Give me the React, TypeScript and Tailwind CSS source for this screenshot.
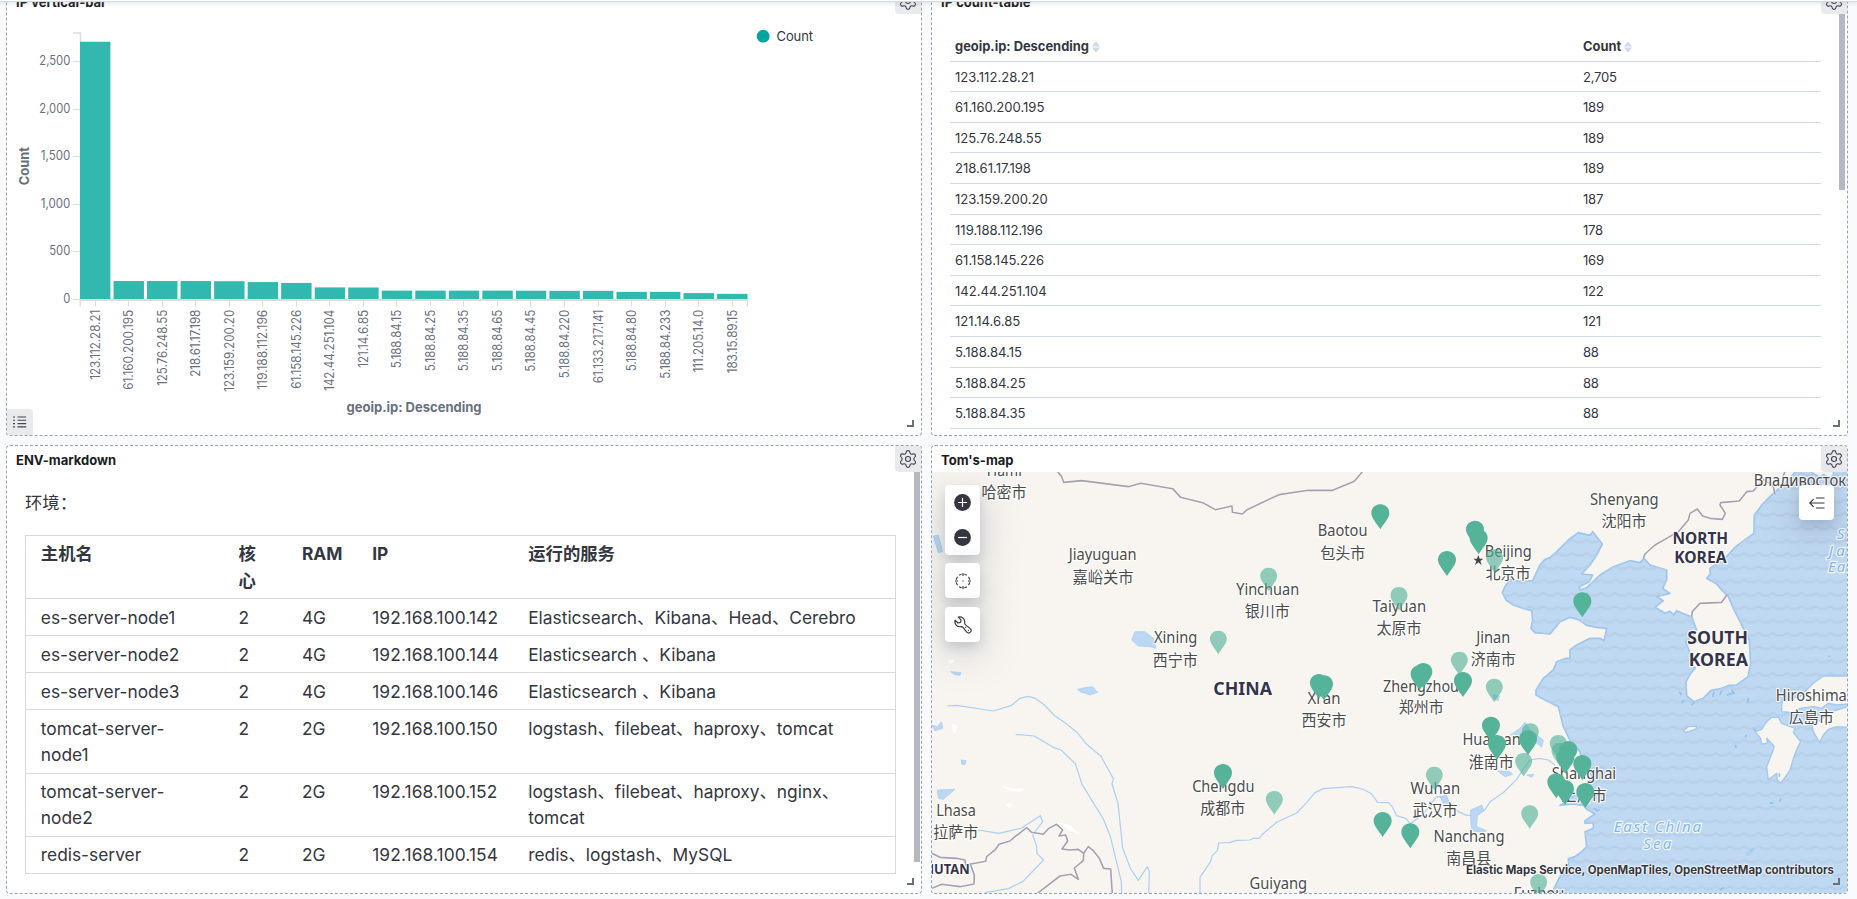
import React from 'react';
import { Settings } from 'lucide-react';

const UI = "font-['Inter','Noto_Sans_CJK_SC',sans-serif]";

/* ---------- shared panel chrome ---------- */

function ResizeHandle() {
  return <div className="absolute right-[7px] bottom-[8px] h-[7px] w-[7px] border-r-2 border-b-2 border-[#69707d]" />;
}

function Panel({ title, children }: { title: string; children: React.ReactNode }) {
  return (
    <section className="relative flex h-[449px] flex-col overflow-hidden rounded-[4px] border border-dashed border-[#98a2b3] bg-white">
      <header className="flex h-[26px] shrink-0 items-center justify-between">
        <h2 className="pt-[2px] pl-[9px] text-[13px] leading-[26px] font-bold text-[#1a1c21]">{title}</h2>
        <button className="flex h-[26px] w-[26px] items-center justify-center rounded-bl-[4px] bg-[#e9eaec] text-[#404552]">
          <Settings size={20} strokeWidth={1.35} />
        </button>
      </header>
      <div className="relative min-h-0 flex-1">{children}</div>
      <ResizeHandle />
    </section>
  );
}

/* ---------- bar chart ---------- */

const bars: [string, number, number][] = [
  ['123.112.28.21', 2705, 70],
  ['61.160.200.195', 189, 80],
  ['125.76.248.55', 189, 76],
  ['218.61.17.198', 189, 67],
  ['123.159.200.20', 187, 82],
  ['119.188.112.196', 178, 80],
  ['61.158.145.226', 169, 79],
  ['142.44.251.104', 122, 81],
  ['121.14.6.85', 121, 58],
  ['5.188.84.15', 88, 58.5],
  ['5.188.84.25', 88, 61.5],
  ['5.188.84.35', 88, 61.5],
  ['5.188.84.65', 88, 61.5],
  ['5.188.84.45', 87, 62],
  ['5.188.84.220', 86, 68.5],
  ['61.133.217.141', 86, 73.5],
  ['5.188.84.80', 75, 61.5],
  ['5.188.84.233', 75, 69],
  ['111.205.14.0', 62, 62.5],
  ['183.15.89.15', 54, 63.5],
];

const yTicks: [string, number, number][] = [
  ['0', 299.5, 7],
  ['500', 251.5, 21],
  ['1,000', 204.5, 29.5],
  ['1,500', 156.5, 29.5],
  ['2,000', 109.5, 31],
  ['2,500', 61.5, 31],
];

function BarChart() {
  return (
    <svg className="block" width="914" height="421" viewBox="7 14 914 421" fontSize="12.4" fill="#69707d">
      {yTicks.map(([label, y, w]) => (
        <g key={label}>
          <path d={`M73 ${y}H80`} stroke="#ddd" />
          <text x={70.3 - w} y={y + 3.8} textLength={w} lengthAdjust="spacingAndGlyphs">{label}</text>
        </g>
      ))}
      <path d="M73 33H80.5V299" stroke="#ddd" strokeWidth="1.6" fill="none" />
      {bars.map(([ip, v, w], i) => {
        const x = 80 + i * 33.53;
        const tick = Math.floor(95.1 + i * 33.53) + 0.5;
        const h = v * 0.0951;
        return (
          <g key={ip}>
            <rect x={x} y={299 - h} width="30.4" height={h} fill="#33b8af" />
            <path d={`M${tick} 301V306.5`} stroke="#ddd" />
            <text transform={`translate(${tick + 4.2} ${309.8 + w}) rotate(-90)`} textLength={w} lengthAdjust="spacingAndGlyphs">{ip}</text>
          </g>
        );
      })}
      <path d="M80 300H748" stroke="#ddd" strokeWidth="2" />
      <path d="M80.2 299V306.5M747.5 299V306.5" stroke="#ddd" strokeWidth="1.4" />
      <text transform="translate(29.3 185.3) rotate(-90)" fontWeight="700" fontSize="13" textLength="38.3">Count</text>
      <text x="346.5" y="412" fontWeight="700" fontSize="13" textLength="135">geoip.ip: Descending</text>
      <circle cx="763.2" cy="36.2" r="6.4" fill="#00a69b" />
      <text x="776.5" y="41" fill="#343741" fontSize="13" textLength="36.5">Count</text>
    </svg>
  );
}

function ListIcon() {
  return (
    <svg width="14" height="12" viewBox="0 0 14 12" stroke="#404552" strokeWidth="1.1">
      <path d="M0 1H2M0 4.3H2M0 7.6H2M0 10.9H2M4.5 1H13.2M4.5 4.3H13.2M4.5 7.6H13.2M4.5 10.9H13.2" />
    </svg>
  );
}

/* ---------- count table ---------- */

const counts: [string, string][] = [
  ['123.112.28.21', '2,705'],
  ['61.160.200.195', '189'],
  ['125.76.248.55', '189'],
  ['218.61.17.198', '189'],
  ['123.159.200.20', '187'],
  ['119.188.112.196', '178'],
  ['61.158.145.226', '169'],
  ['142.44.251.104', '122'],
  ['121.14.6.85', '121'],
  ['5.188.84.15', '88'],
  ['5.188.84.25', '88'],
  ['5.188.84.35', '88'],
];

function SortIcon() {
  return (
    <svg className="ml-[3px]" width="8" height="10" viewBox="0 0 8 10" fill="#d3dae6">
      <path d="M4 0Q5 0 5.6 1.1L8 4.4H0L2.4 1.1Q3 0 4 0ZM4 10Q5 10 5.6 8.9L8 5.6H0L2.4 8.9Q3 10 4 10Z" />
    </svg>
  );
}

function CountTable() {
  return (
    <div className="h-full overflow-hidden pt-[17px] pl-[18px] text-[13.1px] text-[#343741]">
      <div className="w-[871px]">
        <div className="flex h-[30.6px] items-center border-b border-[#d3dae6] pt-[2px] pl-[5px] text-[12.9px] font-bold">
          <div className="flex w-[628px] items-center">geoip.ip: Descending<SortIcon /></div>
          <div className="flex items-center">Count<SortIcon /></div>
        </div>
        {counts.map(([ip, n]) => (
          <div key={ip} className="flex h-[30.6px] items-center border-b border-[#d3dae6] pt-[2px] pl-[5px]">
            <div className="w-[628px]">{ip}</div>
            <div className="tracking-[-0.02em]">{n}</div>
          </div>
        ))}
      </div>
      <div className="absolute top-0 right-[2px] h-[176px] w-[6px] bg-[#b4b8c2]" />
    </div>
  );
}

/* ---------- markdown ---------- */

const hosts: [string[], string, string, string[]][] = [
  [['es-server-node1'], '4G', '192.168.100.142', ['Elasticsearch、Kibana、Head、Cerebro']],
  [['es-server-node2'], '4G', '192.168.100.144', ['Elasticsearch 、Kibana']],
  [['es-server-node3'], '4G', '192.168.100.146', ['Elasticsearch 、Kibana']],
  [['tomcat-server-', 'node1'], '2G', '192.168.100.150', ['logstash、filebeat、haproxy、tomcat']],
  [['tomcat-server-', 'node2'], '2G', '192.168.100.152', ['logstash、filebeat、haproxy、nginx、', 'tomcat']],
  [['redis-server'], '2G', '192.168.100.154', ['redis、logstash、MySQL']],
];

function Lines({ items }: { items: string[] }) {
  return <>{items.map((t) => <span key={t} className="block whitespace-nowrap">{t}</span>)}</>;
}

function Markdown() {
  const row = 'border-b border-[#d9d9d9] align-top';
  return (
    <div className="h-full overflow-hidden pt-[18px] pl-[18px] text-[17.35px] leading-[26.4px] text-[#343741]">
      <p>环境：</p>
      <table className="mt-[18.6px] w-[871px] table-fixed border-collapse border border-[#d9d9d9] text-left [&_td]:pt-[5.2px] [&_td]:pb-[4.4px] [&_td]:pl-[14.8px] [&_th]:pt-[5.2px] [&_th]:pb-[4.4px] [&_th]:pl-[14.8px]">
        <colgroup>
          <col className="w-[198.3px]" />
          <col className="w-[63.3px]" />
          <col className="w-[70.3px]" />
          <col className="w-[156px]" />
          <col />
        </colgroup>
        <thead>
          <tr className={row}>
            <th>主机名</th>
            <th><Lines items={['核', '心']} /></th>
            <th>RAM</th>
            <th>IP</th>
            <th>运行的服务</th>
          </tr>
        </thead>
        <tbody>
          {hosts.map(([name, ram, ip, services]) => (
            <tr key={ip} className={row}>
              <td><Lines items={name} /></td>
              <td>2</td>
              <td>{ram}</td>
              <td className="tracking-[0.006em]">{ip}</td>
              <td><Lines items={services} /></td>
            </tr>
          ))}
        </tbody>
      </table>
      <div className="absolute top-0 right-[1px] h-[390px] w-[6px] bg-[#b4b8c0]" />
    </div>
  );
}

/* ---------- map ---------- */

const SEA =
  'M2790 90L2625 90 2625 97 2595 130 2560 160 2530 190 2503 225 2502 280 2460 310 2445 322 2420 350 2370 385 2371 402 2360 415 2390 432 2405 450 2425 470 2440 505 2460 545 2488 600 2490 640 2492 670 2484 710 2450 735 2428 736 2405 745 2372 752 2350 775 2322 785 2300 768 2298 725 2312 700 2326 684 2312 672 2322 660 2310 640 2297 605 2315 590 2330 570 2315 530 2300 525 2270 512 2262 525 2250 514 2235 520 2205 502 2230 482 2210 470 2250 460 2228 445 2240 420 2240 390 2190 375 2172 355 2160 368 2130 362 2080 380 2040 405 2000 443 1980 450 1978 440 2008 425 2018 405 1985 402 2010 375 2030 345 2047 312 2018 275 2010 286 1975 278 1945 300 1910 335 1890 353 1875 358 1860 375 1848 400 1838 422 1800 425 1770 418 1755 440 1747 458 1758 480 1780 495 1815 507 1835 512 1838 540 1833 565 1845 578 1890 582 1900 570 1920 545 1950 532 1978 540 2000 556 2030 562 2060 565 2052 602 2040 595 2010 595 1970 615 1950 630 1950 655 1938 655 1910 665 1900 690 1870 715 1848 750 1848 765 1875 780 1915 800 1930 860 1952 905 1980 935 1985 960 2010 990 2015 1010 2000 1040 1970 1060 1945 1080 1920 1096 1960 1092 1990 1096 2000 1108 2025 1122 1995 1142 1995 1150 2020 1148 2020 1165 1995 1175 2000 1220 1985 1235 1965 1250 1945 1256 1947 1280 1920 1310 1900 1350 1880 1370 2790 1370Z';

const ISLANDS = [
  'M2585 795L2588 780 2640 770 2680 730 2710 708 2790 708 2790 792 2750 795 2725 790 2705 805 2680 800 2640 805 2620 818 2585 815Z',
  'M2790 798L2750 810 2720 820 2705 840 2675 850 2680 875 2698 908 2710 885 2725 868 2750 860 2790 862Z',
  'M2505 875L2525 868 2540 845 2555 832 2575 832 2585 850 2625 865 2620 878 2642 905 2632 925 2622 950 2610 990 2600 1005 2582 1030 2572 1020 2570 1000 2545 1020 2540 980 2560 930 2562 918 2540 895 2542 910 2525 912 2522 895Z',
  'M2290 872L2305 860 2330 858 2328 867 2300 877Z',
  'M2675 90H2740V108L2725 112 2710 103 2700 112 2675 97Z',
  'M2480 1240L2500 1226 2495 1236 2482 1246Z',
];

const ISLETS =
  'M2315 795L2322 788M2278 755L2285 765M2286 788L2292 780M2378 770L2382 755M2400 765L2405 752M2420 765L2445 758M2435 748L2440 760M2482 790L2486 774M2448 925L2446 915M2475 892L2480 885M2500 862L2508 875M2578 1085L2583 1075M2550 1090L2560 1088M2028 1112L2040 1110M2400 1350L2412 1342M2725 650L2730 648M2578 1000V1010M2022 1105L2030 1112';

const RIVERS =
  'M82 798L110 796 220 813 273 797 300 775 325 769 345 775 370 792 405 828 435 848 470 876 500 913 543 949 580 1016 576 1032 594 1090 608 1224 632 1287 655 1321 682 1280 688 1295 686 1362M287 883L343 888 400 922 423 930 466 971 486 1033 550 1137 571 1189 604 1325 605 1362M175 1170L237 1180 305 1164 361 1127 368 1145 338 1185 350 1220 351 1241 371 1260 308 1325 265 1346 195 1358M840 1362L840 1312 872 1264 877 1246 892 1232 896 1209 928 1208 950 1201 990 1200 1000 1195 1018 1195 1025 1185 1070 1147 1130 1119 1155 1093 1185 1058 1210 1046 1295 1040 1330 1048 1355 1062 1373 1087 1405 1088 1417 1100 1430 1127 1457 1135 1471 1151 1510 1122 1550 1070 1580 1072 1590 1090 1615 1115 1640 1126 1670 1126 1695 1110 1710 1085 1752 1056 1790 1018 1815 980 1830 960 1858 955 1885 960 1905 975';

const BORDERS =
  'M413 95L425 110 431 127 485 122 625 140 662 130 758 146 782 172 848 188 886 209 936 198 937 217 967 222 980 210 1077 164 1165 151 1238 151 1303 124 1328 94M2170 355L2175 342 2205 315 2240 295 2275 275 2305 240 2310 220 2332 207 2348 228 2370 235 2407 238 2416 220 2400 195 2402 188 2458 183 2480 155 2500 153 2520 130 2532 118 2560 140 2565 163M2595 95L2588 112M2315 530L2317 515 2340 490 2405 487 2422 463M36 1240L60 1252 110 1255 135 1260 137 1275 197 1264 200 1250 225 1230 237 1213 270 1203 285 1190 320 1163 335 1177 370 1183 385 1166 410 1153 428 1170 417 1188 437 1185 443 1203 426 1227 450 1230 475 1228 491 1240 505 1220 520 1232 538 1255 551 1285 572 1287 577 1362M491 1240L490 1262 463 1284 475 1318 453 1303 420 1308 352 1360M150 1270L163 1305 162 1332 120 1340 65 1333 36 1345';

const LAKES =
  'M635 600L645 575 675 575 700 595 708 625 690 620 655 618ZM473 748L500 742 518 740 533 757 510 765 480 755ZM40 288L55 285 68 335 55 338ZM36 855L52 860 65 845 68 865 45 873ZM92 695L123 698 120 706 105 704ZM52 1050L105 1048 70 1078 55 1075ZM124 960L138 962 135 974 125 972ZM1652 1110L1685 1095 1692 1110 1672 1125 1670 1160 1700 1172 1690 1178 1655 1172 1652 1140ZM1800 865L1815 847 1830 870 1870 900 1865 922 1845 905 1800 885 1770 885ZM1733 993L1770 995 1778 1003 1755 1010ZM1820 1005L1842 1003 1835 1012ZM1560 1070L1580 1065 1585 1090 1570 1092ZM1720 765L1738 768 1735 782 1722 778Z';

const SNOW =
  'M243 1037L275 1045 315 1047 300 1055 270 1053ZM96 852L110 855 108 880 100 878ZM408 1145L450 1155 480 1182 450 1172ZM253 1090L280 1092 268 1104ZM85 660L100 658 100 670 88 670ZM175 1262L205 1255 195 1275Z';

/* [text, centre x, baseline, drawn width] */
const cities: [string, number, number, number][] = [
  ['Hami', 253, 107, 105], ['哈密市', 252, 175, 135],
  ['Jiayuguan', 548, 361, 204], ['嘉峪关市', 549, 428, 183],
  ['Xining', 767, 610, 130], ['西宁市', 766, 678, 135],
  ['Chengdu', 910, 1055, 187], ['成都市', 908, 1122, 135],
  ['Lhasa', 108, 1127, 119], ['拉萨市', 107, 1194, 135],
  ['Baotou', 1268, 289, 149], ['包头市', 1268, 356, 135],
  ['Yinchuan', 1043, 465, 189], ['银川市', 1042, 531, 135],
  ['Taiyuan', 1438, 515, 161], ['太原市', 1437, 581, 135],
  ['Beijing', 1765, 350, 141], ['北京市', 1764, 417, 135],
  ['Jinan', 1720, 608, 102], ['济南市', 1720, 675, 135],
  ['Zhengzhou', 1503, 755, 228], ['郑州市', 1504, 820, 135],
  ["Xi'an", 1212, 791, 99], ['西安市', 1212, 857, 135],
  ['Huainan', 1715, 915, 175], ['淮南市', 1714, 983, 135],
  ['Wuhan', 1546, 1062, 149], ['武汉市', 1545, 1128, 135],
  ['Nanchang', 1647, 1206, 213], ['南昌县', 1646, 1271, 135],
  ['Guiyang', 1075, 1346, 173],
  ['Fuzhou', 1857, 1378, 152],
  ['Shanghai', 1992, 1017, 193], ['上海市', 1992, 1082, 135],
  ['Shenyang', 2113, 195, 206], ['沈阳市', 2112, 260, 135],
  ['Владивосток', 2640, 138, 277],
  ['Hiroshima', 2674, 782, 213], ['広島市', 2674, 848, 135],
];

const countries: [string, number, number, number, number][] = [
  ['CHINA', 968, 765, 176, 53],
  ['NORTH', 2341, 312, 167, 47], ['KOREA', 2341, 369, 157, 47],
  ['SOUTH', 2393, 613, 182, 53], ['KOREA', 2395, 678, 178, 53],
  ['BHUTAN', 68, 1303, 162, 41],
];

const seas: [string, number, number, number][] = [
  ['East China', 2212, 1178, 262], ['Sea', 2212, 1227, 84],
  ['S', 2761, 298, 22], ['Ja', 2750, 348, 48], ['Ea', 2750, 397, 52],
];

/* pin heads, given by centre x and top y */
const faint: [number, number][] = [
  [895, 572], [1046, 383], [1437, 441], [1724, 328], [1618, 635], [1723, 716], [1543, 980],
  [1811, 939], [1831, 850], [1829, 1096], [1063, 1053], [1856, 1302], [1915, 885], [1920, 908],
];
const solid: [number, number][] = [
  [1381, 193], [1665, 242], [1676, 268], [1581, 333], [1987, 457], [1197, 702], [1212, 706],
  [1510, 669], [1499, 676], [1629, 696], [1713, 830], [1731, 885], [1824, 871], [1388, 1116],
  [1471, 1150], [909, 972], [1945, 903], [1936, 926], [1987, 945], [1909, 1000], [1935, 1020], [1996, 1029],
];

const PIN = 'M0 0C15 0 27 11 27 26C27 40 15 52 0 75C-15 52 -27 40 -27 26C-27 11 -15 0 0 0Z';

function MapCanvas() {
  return (
    <svg className="block font-['Noto_Sans','Noto_Sans_CJK_SC',sans-serif]" width="915" height="421" viewBox="932 472 915 421">
      <defs>
        <pattern id="waves" width="43" height="40" patternUnits="userSpaceOnUse" y="8">
          <path d="M-2 17Q3 20 10 18L18 13Q21 11 25 13L33 18Q40 20 45 17" fill="none" stroke="#b7cfe8" strokeWidth="7" />
        </pattern>
      </defs>
      <rect x="932" y="472" width="915" height="421" fill="#f8f5f0" />
      <g transform="translate(920 440) scale(0.33333)" strokeLinejoin="round">
        <path d={SNOW} fill="#fff" />
        <path d={RIVERS} fill="none" stroke="#abcff2" strokeWidth="3.6" />
        <path d={LAKES} fill="#bad7f3" stroke="#a4caf0" strokeWidth="2" />
        <path d={SEA} fill="#bfd9f2" stroke="#9cc6f1" strokeWidth="5" />
        <path d={SEA} fill="url(#waves)" />
        {ISLANDS.map((d) => <path key={d} d={d} fill="#f8f5f0" stroke="#a0c8f1" strokeWidth="4" />)}
        <path d={ISLETS} stroke="#94c0f0" strokeWidth="5" />
        <path d={BORDERS} fill="none" stroke="#fff" strokeOpacity=".6" strokeWidth="8" />
        <path d={BORDERS} fill="none" stroke="#a4a0b0" strokeWidth="4.8" />

        <g paintOrder="stroke" stroke="#fff" strokeWidth="7" strokeOpacity=".85">
          <g fill="#4c4c4c" fontSize="46.5">
            {cities.map(([t, x, y, w]) => (
              <text key={t} x={x - w / 2} y={y} textLength={w} lengthAdjust="spacingAndGlyphs">{t}</text>
            ))}
          </g>
          <g fill="#35344a" fontWeight="700">
            {countries.map(([t, x, y, w, s]) => (
              <text key={t + y} x={x - w / 2} y={y} fontSize={s} textLength={w} lengthAdjust="spacingAndGlyphs">{t}</text>
            ))}
          </g>
          <g fill="#82b5ea" fontStyle="italic" fontSize="45">
            {seas.map(([t, x, y, w]) => <text key={t} x={x - w / 2} y={y - 1} textLength={w}>{t}</text>)}
          </g>
        </g>
        <path d="M1675 345L1679 356 1690 356 1681 363 1685 375 1675 367 1665 375 1669 363 1660 356 1671 356Z" fill="#444" />

        {faint.map(([x, y]) => (
          <path key={`${x}-${y}`} d={PIN} transform={`translate(${x} ${y}) scale(0.94)`} fill="#54b399" fillOpacity=".64" />
        ))}
        {solid.map(([x, y]) => (
          <path key={`${x}-${y}`} d={PIN} transform={`translate(${x} ${y})`} fill="#54b399" />
        ))}
      </g>
    </svg>
  );
}

const CONTROL =
  'flex w-[35px] items-center justify-center rounded-[4px] bg-white shadow-[0_6px_12px_-1px_rgba(65,78,101,0.2),0_10px_40px_rgba(65,78,101,0.25)]';

function ZoomIcon({ minus }: { minus?: boolean }) {
  return (
    <svg width="17" height="17" viewBox="0 0 17 17">
      <circle cx="8.5" cy="8.5" r="8.4" fill="#343741" />
      <path d={minus ? 'M4 8.5H13' : 'M4 8.5H13M8.5 4V13'} stroke="#fff" strokeWidth="1.2" />
    </svg>
  );
}

function MapPanel() {
  return (
    <>
      <MapCanvas />
      <div className="absolute top-[13px] left-[13px] flex flex-col">
        <div className={`${CONTROL} h-[70px] flex-col gap-[18px]`}>
          <ZoomIcon />
          <ZoomIcon minus />
        </div>
        <div className={`${CONTROL} mt-[8px] h-[35px]`}>
          <svg width="16" height="16" viewBox="0 0 16 16" fill="none" stroke="#343741" strokeWidth="1.1">
            <path d="M6.6 1.25A6.9 6.9 0 0 0 4.2 2.2M2.5 3.8A6.9 6.9 0 0 0 1.25 6.6M9.4 1.25A6.9 6.9 0 0 1 11.8 2.2M13.5 3.8A6.9 6.9 0 0 1 14.75 6.6M6.6 14.75A6.9 6.9 0 0 1 4.2 13.8M2.5 12.2A6.9 6.9 0 0 1 1.25 9.4M9.4 14.75A6.9 6.9 0 0 0 11.8 13.8M13.5 12.2A6.9 6.9 0 0 0 14.75 9.4" />
            <path d="M8 0V3M8 13V16M0 8H3M13 8H16M7.4 8H8.6" />
          </svg>
        </div>
        <div className={`${CONTROL} mt-[9px] h-[35px]`}>
          <svg width="18" height="18" viewBox="0 0 18 18" fill="none" stroke="#343741" strokeWidth="1.15" strokeLinejoin="round" strokeLinecap="round">
            <path d="M4.2 1.1A5 5 0 0 1 10.6 6.9C10.6 7.7 11 8.4 11.6 8.9L16.3 12.6A2.5 2.5 0 0 1 12.8 16.2L8.9 11.4C8.4 10.8 7.7 10.5 6.9 10.6A5 5 0 0 1 1.1 4.2L3.9 7L6.5 6.4L7 3.9Z" />
            <path d="M14.3 14.3h.2M11.6 11.4h.1" />
          </svg>
        </div>
      </div>
      <div className={`${CONTROL} absolute top-[13px] right-[13px] h-[35px]`}>
        <svg width="16" height="12" viewBox="0 0 16 12" fill="none" stroke="#343741" strokeWidth="1.1">
          <path d="M7 1H15.5M.8 6H15.5M7 11H15.5M4.6 2.2L.8 6L4.6 9.8" />
        </svg>
      </div>
      <div className="absolute right-[13px] bottom-[14px] text-[11.4px] leading-[18px] font-bold whitespace-nowrap text-[#343741] [text-shadow:0_0_2px_#fff,0_0_2px_#fff,0_0_3px_#fff]">
        Elastic Maps Service, OpenMapTiles, OpenStreetMap contributors
      </div>
    </>
  );
}

export default function App() {
  return (
    <main className={`relative h-[899px] w-full overflow-hidden bg-[#f9fafc] ${UI}`}>
      <div className="-mt-[13px] grid grid-cols-[916px_917px] gap-[9px] pl-[6px]">
        <Panel title="IP vertical-bar">
          <BarChart />
          <div className="absolute bottom-0 left-0 flex h-[26px] w-[26px] items-center justify-center rounded-tr-[4px] bg-[#e9eaec]">
            <ListIcon />
          </div>
        </Panel>
        <Panel title="IP count-table">
          <CountTable />
        </Panel>
        <Panel title="ENV-markdown">
          <Markdown />
        </Panel>
        <Panel title="Tom's-map">
          <MapPanel />
        </Panel>
      </div>
      <div className="absolute inset-x-0 top-0 h-[2px] border-b border-[#d3dae6] bg-white shadow-[0_2px_3px_rgba(152,162,179,0.3)]" />
    </main>
  );
}
